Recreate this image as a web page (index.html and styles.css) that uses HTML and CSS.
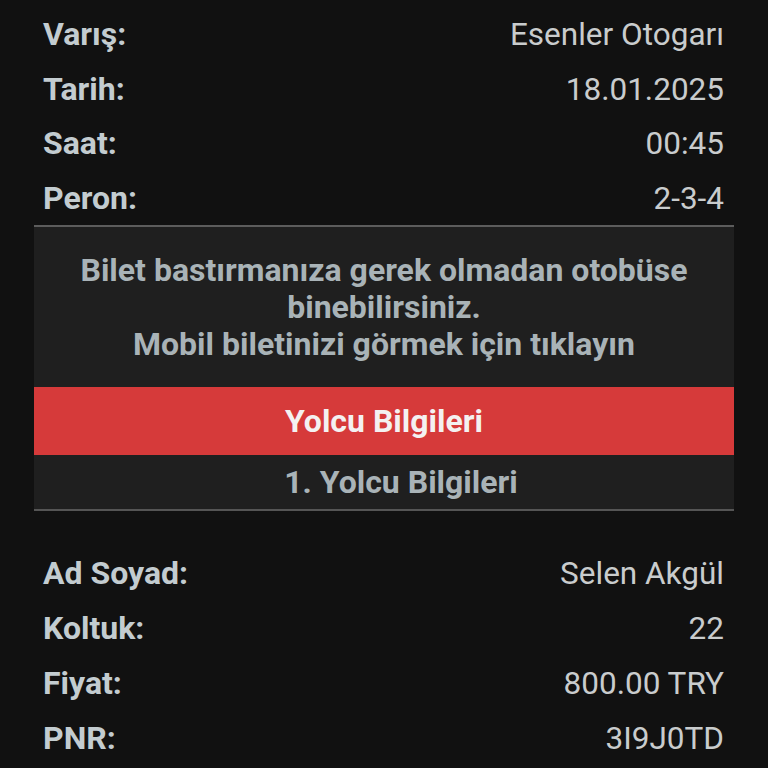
FILE: index.html
```html
<!DOCTYPE html>
<html lang="tr">
<head>
    <meta charset="UTF-8">
    <meta name="viewport" content="width=device-width, initial-scale=1.0">
    <title>Bilet Detayı</title>
    <link rel="stylesheet" href="styles.css">
</head>
<body>
    <div class="ticket">
        <!-- Sefer bilgileri -->
        <div class="info-list">
            <div class="info-row"><span class="label">Varış:</span><span class="value">Esenler Otogarı</span></div>
            <div class="info-row"><span class="label">Tarih:</span><span class="value">18.01.2025</span></div>
            <div class="info-row"><span class="label">Saat:</span><span class="value">00:45</span></div>
            <div class="info-row"><span class="label">Peron:</span><span class="value">2-3-4</span></div>
        </div>

        <div class="panel">
            <div class="panel-note">
                Bilet bastırmanıza gerek olmadan otobüse binebilirsiniz.<br>
                Mobil biletinizi görmek için tıklayın
            </div>
            <div class="panel-title">Yolcu Bilgileri</div>
            <div class="panel-sub">1. Yolcu Bilgileri</div>
        </div>

        <!-- Yolcu bilgileri -->
        <div class="info-list passenger">
            <div class="info-row"><span class="label">Ad Soyad:</span><span class="value">Selen Akgül</span></div>
            <div class="info-row"><span class="label">Koltuk:</span><span class="value">22</span></div>
            <div class="info-row"><span class="label">Fiyat:</span><span class="value">800.00 TRY</span></div>
            <div class="info-row"><span class="label">PNR:</span><span class="value">3I9J0TD</span></div>
        </div>
    </div>
</body>
</html>
```

FILE: styles.css
```css
body {
    margin: 0;
    background: #111111;
    font-family: Roboto, "Noto Sans", Arial, sans-serif;
    color: #c3cbcf;
    overflow: hidden;
}

.ticket {
    width: 700px;
    margin: 0 auto;
    padding-top: 7px;
}

.info-list {
    display: flex;
    flex-direction: column;
    padding: 0 10px 0 9px;
}

.info-row {
    display: flex;
    justify-content: space-between;
    align-items: baseline;
    height: 54.5px;
    line-height: 54.5px;
    font-size: 32px;
}

.label {
    font-weight: 700;
    color: #c3ccd0;
}

.value {
    font-weight: 400;
    font-size: 31.5px;
    color: #c9cccd;
}

.panel {
    background: #1f1f1f;
    border-top: 2px solid #5c5c5c;
    border-bottom: 2px solid #555555;
}

.panel-note {
    padding: 25px 10px 24px;
    text-align: center;
    font-size: 32px;
    font-weight: 700;
    line-height: 37px;
    color: #a9b3b7;
}

.panel-title {
    height: 68px;
    line-height: 68px;
    background: #d63a3a;
    color: #f4f1f1;
    text-align: center;
    font-size: 32px;
    font-weight: 700;
}

.panel-sub {
    height: 54px;
    line-height: 54px;
    padding-left: 34px;
    text-align: center;
    font-size: 32px;
    font-weight: 700;
    color: #a9b3b7;
}

.passenger {
    padding-top: 35px;
}

.passenger .info-row {
    height: 55px;
    line-height: 55px;
}
```
